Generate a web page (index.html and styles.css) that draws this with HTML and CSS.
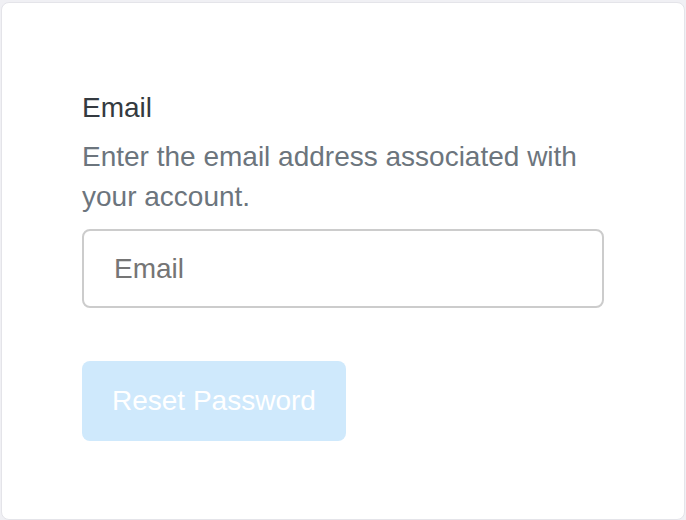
FILE: index.html
```html
<!DOCTYPE html>
<html lang="en">
<head>
<meta charset="utf-8">
<title>Reset Password</title>
<link rel="stylesheet" href="styles.css">
</head>
<body>
<div class="page">
  <div class="card">
    <form class="form">
      <label class="label" for="email">Email</label>
      <p class="help">Enter the email address associated with your account.</p>
      <input class="input" id="email" type="email" placeholder="Email">
      <button class="btn" type="button" disabled>Reset Password</button>
    </form>
  </div>
</div>
</body>
</html>
```

FILE: styles.css
```css
* { box-sizing: border-box; }
html, body { margin: 0; padding: 0; }
body {
  background: #f0f0f4;
  font-family: "Liberation Sans", Arial, sans-serif;
  font-size: 28px;
  line-height: 40px;
  width: 686px;
  height: 520px;
  overflow: hidden;
}
.page {
  padding: 2px 0 0 1px;
  height: 520px;
}
.card {
  width: 684px;
  height: 518px;
  background: #ffffff;
  border: 1px solid #e4e4e9;
  border-radius: 8px;
  padding: 85px 80px 0 80px;
}
.form {
  display: flex;
  flex-direction: column;
  align-items: flex-start;
}
.label {
  color: #343a40;
  display: block;
}
.help {
  color: #6c757d;
  margin: 9px 0 12px 0;
  width: 522px;
}
.input {
  width: 522px;
  height: 79px;
  border: 2px solid #cccccc;
  border-radius: 8px;
  padding: 0 30px;
  font-family: inherit;
  font-size: 28px;
  color: #495057;
  background: #fff;
  outline: none;
}
.input::placeholder { color: #757575; opacity: 1; }
.btn {
  margin-top: 53px;
  height: 80px;
  padding: 0 30px;
  border: none;
  border-radius: 8px;
  background: #cfe9fc;
  color: #ffffff;
  font-family: inherit;
  font-size: 28px;
  line-height: 40px;
}
```
